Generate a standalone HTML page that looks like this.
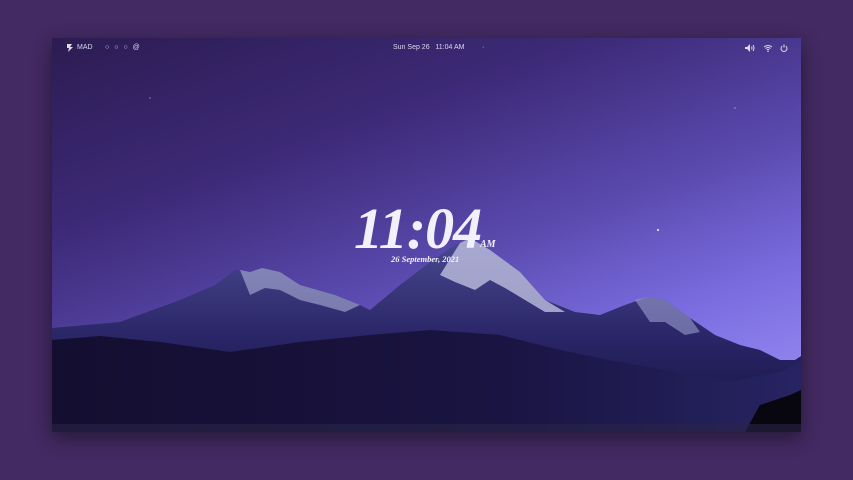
<!DOCTYPE html>
<html><head><meta charset="utf-8"><style>
html,body{margin:0;padding:0;width:853px;height:480px;background:#432a62;overflow:hidden}
#scr{position:absolute;left:52px;top:38px;width:749px;height:394px;overflow:hidden;box-shadow:0 6px 18px rgba(0,0,0,.45);
background:linear-gradient(160deg,#2c1c52 0%,#3d2a78 30%,#5a4aae 55%,#7a6ce0 75%,#a093f5 100%)}
svg{position:absolute;left:0;top:0}
.bar{position:absolute;top:0;left:0;width:749px;height:20px;font:400 7px "Liberation Sans",sans-serif;color:#ddd8ee}
.t{position:absolute;top:6px}
.clock{position:absolute;left:302px;top:157px;font:italic 700 58px "Liberation Serif",serif;color:#f2f0fa;letter-spacing:-1px}
.am{position:absolute;left:428px;top:201px;font:italic 700 10px "Liberation Serif",serif;color:#f2f0fa}
.date{position:absolute;left:339px;top:216px;font:italic 700 8.5px "Liberation Serif",serif;color:#f2f0fa}
</style></head><body>
<div id="scr">
<svg width="749" height="394" viewBox="52 38 749 394">
<defs>
<linearGradient id="m" x1="0" y1="0" x2="0" y2="1"><stop offset="0" stop-color="#4a4a90"/><stop offset="0.5" stop-color="#2a2668"/><stop offset="1" stop-color="#171240"/></linearGradient>
<linearGradient id="f" x1="0" y1="0" x2="1" y2="0"><stop offset="0" stop-color="#140e30"/><stop offset="0.6" stop-color="#1a1442"/><stop offset="1" stop-color="#262462"/></linearGradient>
</defs>
<circle cx="658" cy="230" r="1" fill="#fff"/><circle cx="150" cy="98" r=".6" fill="#bbb"/><circle cx="735" cy="108" r=".6" fill="#ccc"/>
<polygon fill="url(#m)" points="52,328 120,322 180,300 215,285 235,270 250,272 262,268 280,272 300,285 335,295 360,305 370,310 400,285 430,262 455,245 470,238 490,250 520,272 545,300 575,312 600,315 625,305 648,297 665,300 690,318 715,335 740,345 760,350 780,360 795,360 801,356 801,432 52,432"/>
<polygon fill="#b8bbe0" opacity=".55" points="240,270 250,272 262,268 280,272 300,285 335,295 360,305 345,312 320,305 300,300 280,290 265,288 250,295"/>
<polygon fill="#d0d2ee" opacity=".7" points="460,243 470,238 490,250 520,272 545,300 565,312 545,312 525,300 505,288 490,280 475,290 455,282 440,275"/>
<polygon fill="#a6a8d8" opacity=".55" points="635,300 648,297 665,300 690,318 700,332 685,335 665,322 650,322"/>
<polygon fill="url(#f)" points="52,340 100,336 160,342 230,352 300,342 370,335 430,330 500,335 560,350 620,362 680,372 730,382 780,372 801,362 801,432 52,432"/>
<polygon fill="#08060f" points="745,432 760,405 790,395 801,390 801,432"/>
<rect x="52" y="424" width="749" height="8" fill="#2a2448" opacity=".6"/>
</svg>
<div class="bar">
<svg width="10" height="10" style="left:13px;top:5px" viewBox="0 0 10 10"><path d="M2 1h5l-2 3h3l-5 5 1-4H2z" fill="#ddd"/></svg>
<span class="t" style="left:25px">MAD</span>
<span class="t" style="left:53px;letter-spacing:5px">○○○@</span>
<span class="t" style="left:341px">Sun Sep 26&nbsp;&nbsp;&nbsp;11:04 AM</span>
<span class="t" style="left:430px">·</span>
<svg width="10" height="8" style="left:693px;top:6px" viewBox="0 0 10 8"><path d="M0 3h2l3-3v8L2 5H0z" fill="#ddd"/><path d="M6.5 2.5q1 1.5 0 3M8 1q2 3 0 6" stroke="#ddd" fill="none"/></svg>
<svg width="10" height="8" style="left:711px;top:6px" viewBox="0 0 10 8"><path d="M1 3q4-3 8 0M2.5 4.5q2.5-2 5 0M4 6q1-1 2 0" stroke="#ddd" fill="none" stroke-width="1"/><circle cx="5" cy="7.3" r=".7" fill="#ddd"/></svg>
<svg width="8" height="8" style="left:728px;top:6px" viewBox="0 0 8 8"><path d="M2.3 2a3 3 0 1 0 3.4 0M4 .5v3" stroke="#ddd" fill="none" stroke-width="1"/></svg>
</div>
<div class="clock">11:04</div>
<div class="am">AM</div>
<div class="date">26 September, 2021</div>
</div>
</body></html>
